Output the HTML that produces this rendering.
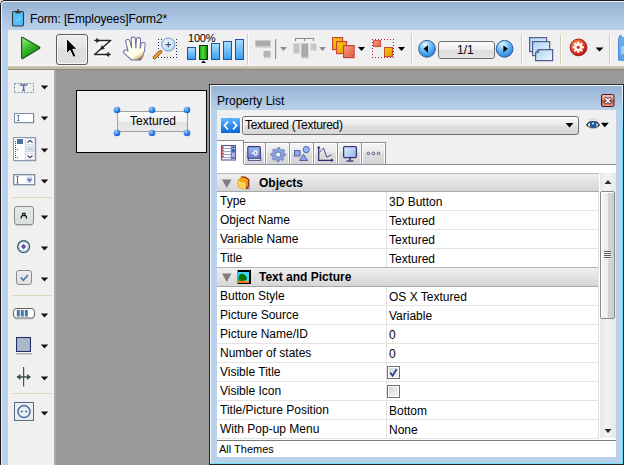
<!DOCTYPE html>
<html><head><meta charset="utf-8">
<style>
*{box-sizing:border-box}
html,body{margin:0;padding:0;width:624px;height:465px;overflow:hidden;position:relative;background:#e8e8e8;font-family:"Liberation Sans",sans-serif;font-size:12px;color:#000}
.a{position:absolute;display:block}
.t{position:absolute;white-space:nowrap;line-height:14px;color:#000}
.hb{font-weight:bold}
</style></head><body>
<div class="a" style="left:0px;top:0px;width:624px;height:465px;border-left:1px solid #1c1c1c;border-top:1px solid #1c1c1c;border-top-left-radius:5px;background:#b9d1ea"></div>
<div class="a" style="left:1px;top:1px;width:623px;height:464px;border-left:1px solid #eef3f9;border-top:1px solid #eef3f9;border-top-left-radius:4px"></div>
<div class="a" style="left:2px;top:2px;width:622px;height:28px;background:linear-gradient(#97b3d4,#b9d1ea);border-top-left-radius:3px"></div>
<div class="t" style="left:30px;top:12px;letter-spacing:-0.13px">Form: [Employees]Form2*</div>
<svg class="a" style="left:11px;top:9px;" width="14" height="18" viewBox="0 0 14 18"><rect x="1.5" y="2.5" width="11" height="14.5" rx="1.2" fill="#46b4f0" stroke="#3a3a3a" stroke-width="1.1"/><rect x="2.6" y="3.6" width="8.8" height="12.3" fill="#52c0f8"/><rect x="4.5" y="2" width="5" height="2.4" fill="#3a3a3a"/><rect x="6" y="0.5" width="2" height="2" fill="#3a3a3a"/><path d="M4.5 10 L6.3 12 L9.8 7.8" stroke="#9adcff" stroke-width="1" fill="none"/></svg>
<div class="a" style="left:8px;top:30px;width:616px;height:36px;background:#f0f0f0"></div>
<div class="a" style="left:8px;top:65px;width:616px;height:1px;background:#f8f8f8"></div>
<div class="a" style="left:8px;top:66px;width:616px;height:3px;background:linear-gradient(#cdc9b5,#bdb9a4)"></div>
<div class="a" style="left:8px;top:69px;width:616px;height:1px;background:#8a897a"></div>
<svg class="a" style="left:18px;top:35px;" width="25" height="26" viewBox="0 0 25 26"><defs><linearGradient id="gp" x1="0.1" y1="0" x2="0.75" y2="1"><stop offset="0" stop-color="#9cf07c"/><stop offset="0.45" stop-color="#3cbc2c"/><stop offset="1" stop-color="#0c780c"/></linearGradient></defs><path d="M3.6 3.2 Q3.6 1.8 4.9 2.5 L21.3 12 Q22.4 12.8 21.3 13.6 L4.9 23.4 Q3.6 24 3.6 22.6 Z" fill="url(#gp)" stroke="#1a5a1a" stroke-width="1.2" stroke-linejoin="round"/></svg>
<div class="a" style="left:56px;top:34px;width:32px;height:31px;border:1px solid #5c5c5c;border-radius:3px;background:linear-gradient(#ececec,#e4e4e4 45%,#dcdcdc 50%,#e0e0e0);box-shadow:inset 0 0 0 1px #f6f6f6"></div>
<svg class="a" style="left:63px;top:36px;" width="18" height="24" viewBox="0 0 18 24"><path d="M4.5 3.5 L4.5 18.5 L8 15.3 L11.2 22.3 L13.8 21.1 L10.8 14.3 L15.2 14.3 Z" fill="#a0a0a0" opacity="0.45"/><path d="M3.5 2.5 L3.5 17.5 L7 14.3 L10.2 21.3 L12.8 20.1 L9.8 13.3 L14.2 13.3 Z" fill="#000" stroke="#fff" stroke-width="0.9" stroke-linejoin="round"/></svg>
<svg class="a" style="left:91px;top:36px;" width="24" height="24" viewBox="0 0 24 24"><g stroke="#ffffff" stroke-width="3.4" fill="none" opacity="0.9" stroke-linejoin="round" transform="translate(0.5 0.7)"><path d="M3.3 4.5 H19.8 L3.5 18.5 H19.8"/></g><g stroke="#242424" stroke-width="1.45" fill="none" stroke-linejoin="round"><path d="M3.3 4.5 H19.8 L3.5 18.5 H19.8"/></g><path d="M5.4 2.2 L8.8 4.5 L5.4 6.8 Z M9.1 13.9 L13.6 12.6 L10.9 9.5 Z M14.6 18.5 L17.8 16.2 L17.8 20.8 Z" fill="#242424" stroke="#242424" stroke-width="0.4" stroke-linejoin="round"/></svg>
<svg class="a" style="left:122px;top:36px;" width="25" height="26" viewBox="0 0 25 26"><defs><linearGradient id="gh" x1="0.2" y1="0.3" x2="0.75" y2="1"><stop offset="0" stop-color="#fffff0"/><stop offset="0.5" stop-color="#fffbe6"/><stop offset="0.78" stop-color="#e4d0a0"/><stop offset="1" stop-color="#8a6020"/></linearGradient></defs><g stroke="#6c6cae" stroke-width="5.2" stroke-linecap="round" fill="none"><path d="M5.8 5.6 L7.8 13"/><path d="M11.3 3 L11.7 12"/><path d="M16.5 3.5 L16 12"/><path d="M21.1 8.5 L20.2 15.5"/><path d="M3.8 16 L7.6 19.2"/></g><path d="M7 11.5 L21 12 L20.6 19.5 L18.3 23.6 L9.5 23.6 L5.5 19 Z" fill="#6c6cae" stroke="#6c6cae" stroke-width="2" stroke-linejoin="round"/><g stroke="#fffcec" stroke-width="3.2" stroke-linecap="round" fill="none"><path d="M5.8 5.6 L7.8 13"/><path d="M11.3 3 L11.7 12"/><path d="M16.5 3.5 L16 12"/><path d="M21.1 8.5 L20.2 15.5"/><path d="M3.8 16 L7.6 19.2"/></g><path d="M7 12 L21 12.5 L20.6 19.5 L18.3 23.6 L9.5 23.6 L5.5 19 Z" fill="url(#gh)"/></svg>
<svg class="a" style="left:151px;top:36px;" width="28" height="25" viewBox="0 0 28 25"><defs><radialGradient id="gz" cx="0.4" cy="0.35" r="0.7"><stop offset="0" stop-color="#f0fbff"/><stop offset="0.7" stop-color="#bfe6fa"/><stop offset="1" stop-color="#9fd0f0"/></radialGradient></defs><g fill="#2a2a66"><rect x="7" y="3" width="1" height="1"/><rect x="10" y="3" width="1" height="1"/><rect x="25" y="3" width="1" height="1"/><rect x="7" y="6" width="1" height="1"/><rect x="7" y="9" width="1" height="1"/><rect x="7" y="12" width="1" height="1"/><rect x="25" y="6" width="1" height="1"/><rect x="25" y="9" width="1" height="1"/><rect x="25" y="12" width="1" height="1"/><rect x="25" y="15" width="1" height="1"/><rect x="25" y="18" width="1" height="1"/><rect x="25" y="21" width="1" height="1"/><rect x="7" y="21" width="1" height="1"/><rect x="10" y="21" width="1" height="1"/><rect x="13" y="21" width="1" height="1"/><rect x="16" y="21" width="1" height="1"/><rect x="19" y="21" width="1" height="1"/><rect x="22" y="21" width="1" height="1"/></g><path d="M3.5 21.5 L9.5 15.8" stroke="#7a4a10" stroke-width="3.6" stroke-linecap="round"/><path d="M3.5 21.5 L9.5 15.8" stroke="#f5a030" stroke-width="2.2" stroke-linecap="round"/><circle cx="17.3" cy="8.6" r="6.6" fill="url(#gz)" stroke="#8a8ec0" stroke-width="1"/><path d="M17.3 5.8 V11.4 M14.5 8.6 H20.1" stroke="#4a4a80" stroke-width="1.1"/></svg>
<div class="t" style="left:188px;top:31px;font-size:11px;color:#000;letter-spacing:-0.2px">100%</div>
<div class="a" style="left:187px;top:47px;width:9px;height:13px;border:1px solid #1c52a8;background:linear-gradient(#a8dcff,#3aa0f0)"></div>
<div class="a" style="left:199px;top:45px;width:9px;height:15px;border:1px solid #0a3a0a;background:linear-gradient(90deg,#20a020,#50e030 45%,#108010)"></div>
<div class="a" style="left:211px;top:43px;width:9px;height:17px;border:1px solid #1c52a8;background:linear-gradient(#a8dcff,#3aa0f0)"></div>
<div class="a" style="left:223px;top:41px;width:9px;height:19px;border:1px solid #1c52a8;background:linear-gradient(#a8dcff,#3aa0f0)"></div>
<div class="a" style="left:235px;top:39px;width:9px;height:21px;border:1px solid #1c52a8;background:linear-gradient(#a8dcff,#3aa0f0)"></div>
<svg class="a" style="left:200px;top:60px;" width="7" height="4" viewBox="0 0 7 4"><path d="M3.5 0.5 L6 3 L1 3 Z" fill="#000"/></svg>
<div class="a" style="left:247px;top:34px;width:1px;height:31px;background:#d6cfb8"></div>
<div class="a" style="left:248px;top:34px;width:1px;height:31px;background:#ffffff"></div>
<svg class="a" style="left:253px;top:37px;" width="36" height="24" viewBox="0 0 36 24"><rect x="2.5" y="3.5" width="15" height="6" fill="#aaaaaa" stroke="#c8c8c8" stroke-width="0.5"/><rect x="3.5" y="9.5" width="15" height="1.5" fill="#d6d6d6"/><rect x="10.5" y="14" width="7" height="6" fill="#b4b4b4"/><rect x="11" y="20" width="7" height="1.5" fill="#d8d8d8"/><rect x="22" y="2" width="1.2" height="20" fill="#939393"/><path d="M27 10 L34 10 L30.5 14 Z" fill="#8c8c8c"/></svg>
<svg class="a" style="left:291px;top:36px;" width="36" height="24" viewBox="0 0 36 24"><path d="M4.5 5 V2.5 H22.5 V5 M13.5 2.5 V5" stroke="#8a8a8a" stroke-width="1.1" fill="none"/><rect x="2.5" y="7.5" width="6" height="9.5" fill="#c2c2c2"/><rect x="3.5" y="17" width="6" height="1.2" fill="#dcdcdc"/><rect x="10.3" y="7.5" width="7" height="14" fill="#a9a9a9"/><rect x="11" y="21.5" width="7" height="1.2" fill="#d4d4d4"/><rect x="19.5" y="7.5" width="6" height="7" fill="#c8c8c8"/><path d="M28 11 L35 11 L31.5 15 Z" fill="#8c8c8c"/></svg>
<svg class="a" style="left:330px;top:35px;" width="38" height="25" viewBox="0 0 38 25"><defs><linearGradient id="gy" x1="0" y1="0" x2="1" y2="1"><stop offset="0" stop-color="#ffd800"/><stop offset="1" stop-color="#d89000"/></linearGradient><linearGradient id="gs" x1="0" y1="0" x2="1" y2="1"><stop offset="0" stop-color="#ffa080"/><stop offset="1" stop-color="#dc5a40"/></linearGradient></defs><rect x="2.6" y="2.6" width="10" height="12" fill="url(#gy)" stroke="#cc4040" stroke-width="1.2"/><rect x="6.6" y="6.6" width="10" height="12" fill="url(#gy)" stroke="#cc4040" stroke-width="1.2"/><rect x="13.6" y="10.6" width="10.5" height="12" fill="url(#gs)" stroke="#c84040" stroke-width="1.2"/><path d="M28 12 L35 12 L31.5 16 Z" fill="#000"/></svg>
<svg class="a" style="left:370px;top:37px;" width="38" height="23" viewBox="0 0 38 23"><defs><linearGradient id="gy2" x1="0" y1="0" x2="1" y2="1"><stop offset="0" stop-color="#ffd000"/><stop offset="1" stop-color="#d89000"/></linearGradient><linearGradient id="gs2" x1="0" y1="0" x2="1" y2="1"><stop offset="0" stop-color="#ffa080"/><stop offset="1" stop-color="#dc5a40"/></linearGradient></defs><g fill="#b01818"><rect x="2" y="2" width="1" height="1"/><rect x="5" y="2" width="1" height="1"/><rect x="8" y="2" width="1" height="1"/><rect x="11" y="2" width="1" height="1"/><rect x="14" y="2" width="1" height="1"/><rect x="17" y="2" width="1" height="1"/><rect x="20" y="2" width="1" height="1"/><rect x="23" y="2" width="1" height="1"/><rect x="2" y="5" width="1" height="1"/><rect x="2" y="8" width="1" height="1"/><rect x="2" y="11" width="1" height="1"/><rect x="2" y="14" width="1" height="1"/><rect x="2" y="17" width="1" height="1"/><rect x="2" y="20" width="1" height="1"/><rect x="5" y="20" width="1" height="1"/><rect x="8" y="20" width="1" height="1"/><rect x="11" y="20" width="1" height="1"/><rect x="14" y="20" width="1" height="1"/><rect x="17" y="20" width="1" height="1"/><rect x="20" y="20" width="1" height="1"/><rect x="23" y="20" width="1" height="1"/><rect x="23" y="5" width="1" height="1"/><rect x="23" y="8" width="1" height="1"/><rect x="23" y="11" width="1" height="1"/><rect x="23" y="14" width="1" height="1"/><rect x="23" y="17" width="1" height="1"/></g><rect x="3.6" y="3.6" width="7" height="6" fill="url(#gs2)" stroke="#c84a3a" stroke-width="0.9"/><rect x="14.5" y="10.5" width="8" height="9" fill="url(#gy2)" stroke="#c84a3a" stroke-width="1"/><path d="M28 10 L35 10 L31.5 14 Z" fill="#000"/></svg>
<div class="a" style="left:411px;top:34px;width:1px;height:31px;background:#d6cfb8"></div>
<div class="a" style="left:412px;top:34px;width:1px;height:31px;background:#ffffff"></div>
<svg class="a" style="left:417px;top:39px;" width="20" height="20" viewBox="0 0 20 20"><defs><radialGradient id="gb" cx="0.4" cy="0.25" r="0.8"><stop offset="0" stop-color="#e8f8ff"/><stop offset="0.45" stop-color="#6cc0f4"/><stop offset="1" stop-color="#1a78d8"/></radialGradient></defs><circle cx="10" cy="9.8" r="8.4" fill="url(#gb)" stroke="#3a5aa0" stroke-width="1"/><path d="M6.5 9.8 L11 6.2 L11 13.4 Z" fill="#000"/></svg>
<div class="a" style="left:438px;top:41px;width:57px;height:18px;border:1px solid #6e6e6e;border-radius:3px;background:linear-gradient(#fbfbfb,#eeeeee 50%,#dcdcdc 51%,#e6e6e6)"></div>
<div class="t" style="left:457px;top:43px;font-size:12px;color:#000">1/1</div>
<svg class="a" style="left:495px;top:39px;" width="20" height="20" viewBox="0 0 20 20"><defs><radialGradient id="gb2" cx="0.4" cy="0.25" r="0.8"><stop offset="0" stop-color="#e8f8ff"/><stop offset="0.45" stop-color="#6cc0f4"/><stop offset="1" stop-color="#1a78d8"/></radialGradient></defs><circle cx="9.6" cy="9.8" r="8.4" fill="url(#gb2)" stroke="#3a5aa0" stroke-width="1"/><path d="M12.8 9.8 L8.4 6.2 L8.4 13.4 Z" fill="#000"/></svg>
<div class="a" style="left:521px;top:34px;width:1px;height:31px;background:#d6cfb8"></div>
<div class="a" style="left:522px;top:34px;width:1px;height:31px;background:#ffffff"></div>
<svg class="a" style="left:527px;top:35px;" width="28" height="28" viewBox="0 0 28 28"><defs><linearGradient id="gpg" x1="0" y1="0" x2="1" y2="1"><stop offset="0" stop-color="#a8d4f2"/><stop offset="1" stop-color="#eef8ff"/></linearGradient></defs><rect x="2.6" y="2.6" width="17" height="14" fill="url(#gpg)" stroke="#5a5a92" stroke-width="1.2"/><rect x="5.6" y="6.6" width="17" height="14" fill="url(#gpg)" stroke="#5a5a92" stroke-width="1.2"/><path d="M11.6 14.6 H25.6 V25.6 H8.6 V17.6 Z" fill="url(#gpg)" stroke="#5a5a92" stroke-width="1.2"/><path d="M11.6 14.6 V17.6 H8.6" fill="none" stroke="#5a5a92" stroke-width="0.9"/></svg>
<div class="a" style="left:560px;top:34px;width:1px;height:31px;background:#d6cfb8"></div>
<div class="a" style="left:561px;top:34px;width:1px;height:31px;background:#ffffff"></div>
<svg class="a" style="left:567px;top:36px;" width="24" height="24" viewBox="0 0 24 24"><defs><radialGradient id="gr" cx="0.35" cy="0.3" r="0.75"><stop offset="0" stop-color="#ff9050"/><stop offset="0.6" stop-color="#e04020"/><stop offset="1" stop-color="#b80e0e"/></radialGradient></defs><circle cx="11.5" cy="11.4" r="8.4" fill="url(#gr)" stroke="#9a1010" stroke-width="0.9"/><g fill="#fff" transform="translate(11.3 11.3)"><circle r="3.8"/><rect x="-1.1" y="-5.6" width="2.2" height="11.2"/><rect x="-5.6" y="-1.1" width="11.2" height="2.2"/><rect x="-1.1" y="-5.6" width="2.2" height="11.2" transform="rotate(45)"/><rect x="-1.1" y="-5.6" width="2.2" height="11.2" transform="rotate(-45)"/></g><circle cx="11.3" cy="11.3" r="1.6" fill="#d83018"/></svg>
<svg class="a" style="left:594px;top:46px;" width="11" height="7" viewBox="0 0 11 7"><path d="M1.5 1.5 L9.5 1.5 L5.5 5.5 Z" fill="#000"/></svg>
<div class="a" style="left:609px;top:34px;width:1px;height:31px;background:#d6cfb8"></div>
<div class="a" style="left:610px;top:34px;width:1px;height:31px;background:#ffffff"></div>
<div class="a" style="left:618px;top:37px;width:6px;height:24px;border-radius:2px 0 0 2px;background:linear-gradient(#6aaef0,#5aa0ea);border-left:1px solid #4a88d0"></div>
<div class="a" style="left:619px;top:35px;width:3px;height:3px;background:#5aa0e8;border-radius:1px 1px 0 0"></div>
<div class="a" style="left:621px;top:46px;width:3px;height:8px;background:#a8d0f4"></div>
<div class="a" style="left:8px;top:70px;width:46px;height:395px;background:#f0f0f0"></div>
<div class="a" style="left:54px;top:70px;width:2px;height:395px;background:linear-gradient(90deg,#b4b4b4,#a2a2a2)"></div>
<div class="a" style="left:56px;top:70px;width:568px;height:395px;background:#999999"></div>
<svg class="a" style="left:13px;top:82px;" width="22" height="12" viewBox="0 0 22 12"><rect x="1.5" y="1.5" width="19" height="9" fill="none" stroke="#7a8898" stroke-width="1" stroke-dasharray="1.6 1.4"/><path d="M7.5 3.5 V3 H13.8 V3.5 M10.6 3 V8.8 M9.2 8.6 H12" stroke="#5a6ea0" stroke-width="1.5" fill="none"/></svg>
<svg class="a" style="left:40px;top:85px;" width="9" height="6" viewBox="0 0 9 6"><path d="M0.8 0.6 L8.2 0.6 L4.5 4.6 Z" fill="#111"/></svg>
<svg class="a" style="left:13px;top:112px;" width="23" height="13" viewBox="0 0 23 13"><rect x="2" y="2" width="20" height="10" fill="#c8ccd0" opacity="0.6"/><rect x="1.5" y="1.5" width="19" height="9" fill="#fff" stroke="#7a8aa0" stroke-width="1"/><path d="M4 3.5 H6.5 M5.25 3.5 V8.5 M4 8.5 H6.5" stroke="#4a6ab0" stroke-width="0.9" fill="none"/></svg>
<svg class="a" style="left:40px;top:116px;" width="9" height="6" viewBox="0 0 9 6"><path d="M0.8 0.6 L8.2 0.6 L4.5 4.6 Z" fill="#111"/></svg>
<svg class="a" style="left:12px;top:136px;" width="25" height="26" viewBox="0 0 25 26"><rect x="2" y="2" width="23" height="24" fill="#c0c4c8" opacity="0.5"/><rect x="1.5" y="1.5" width="22" height="23" fill="#f4f6f8" stroke="#8a9ab0" stroke-width="1"/><rect x="2" y="2" width="10" height="22" fill="#fff"/><rect x="5" y="3" width="6" height="5" fill="#5070a0"/><g fill="#555"><rect x="3" y="5" width="1" height="1"/><rect x="3" y="7" width="1" height="1"/><rect x="3" y="9" width="1" height="1"/><rect x="3" y="11" width="1" height="1"/><rect x="3" y="13" width="1" height="1"/><rect x="5" y="13" width="1" height="1"/><rect x="3" y="15" width="1" height="1"/><rect x="3" y="17" width="1" height="1"/><rect x="3" y="19" width="1" height="1"/><rect x="3" y="21" width="1" height="1"/><rect x="5" y="21" width="1" height="1"/></g><rect x="13.5" y="2.5" width="9" height="6" fill="#fff" stroke="#c8d0dc" stroke-width="0.8"/><rect x="13.5" y="10.5" width="9" height="5" fill="#fff" stroke="#c8d0dc" stroke-width="0.8"/><rect x="14.5" y="11.5" width="7" height="3" fill="#c4cce0"/><rect x="13.5" y="17.5" width="9" height="6" fill="#fff" stroke="#c8d0dc" stroke-width="0.8"/><path d="M15.5 6.5 L18 4.2 L20.5 6.5 M15.5 19.5 L18 21.8 L20.5 19.5" stroke="#3a4a70" stroke-width="1.2" fill="none"/></svg>
<svg class="a" style="left:40px;top:148px;" width="9" height="6" viewBox="0 0 9 6"><path d="M0.8 0.6 L8.2 0.6 L4.5 4.6 Z" fill="#111"/></svg>
<svg class="a" style="left:12px;top:173px;" width="24" height="13" viewBox="0 0 24 13"><rect x="1.7" y="1.7" width="21" height="10" fill="#fff" stroke="#7a8898" stroke-width="1.3"/><path d="M4.5 3.5 H6.5 M5.5 3.5 V10 M4.5 10 H6.5" stroke="#4a5a80" stroke-width="0.9" fill="none"/><rect x="14.5" y="3.5" width="6" height="6.5" rx="1" fill="#d0d8f0"/><path d="M15.7 5.8 L17.5 7.8 L19.3 5.8" stroke="#3a5080" stroke-width="1.2" fill="none"/></svg>
<svg class="a" style="left:40px;top:179px;" width="9" height="6" viewBox="0 0 9 6"><path d="M0.8 0.6 L8.2 0.6 L4.5 4.6 Z" fill="#111"/></svg>
<div class="a" style="left:12px;top:197px;width:40px;height:1px;background:#ddd4bc"></div>
<div class="a" style="left:14px;top:206px;width:20px;height:19px;border:1px solid #8e8e8e;border-radius:3px;background:linear-gradient(#e6e8e8,#dadede);box-shadow:0 1px 1px rgba(0,0,0,0.15)"></div>
<svg class="a" style="left:19px;top:210px;" width="10" height="10" viewBox="0 0 10 10"><path d="M2.2 8.6 V6.8 L3.6 5 V3.2 H6 V5 L7.4 6.8 V8.6 M3.6 5.6 H6" stroke="#000" stroke-width="1.15" fill="none" stroke-linejoin="round"/></svg>
<svg class="a" style="left:40px;top:215px;" width="9" height="6" viewBox="0 0 9 6"><path d="M0.8 0.6 L8.2 0.6 L4.5 4.6 Z" fill="#111"/></svg>
<svg class="a" style="left:16px;top:239px;" width="16" height="16" viewBox="0 0 16 16"><circle cx="7.6" cy="7.6" r="5.9" fill="#fff" stroke="#485868" stroke-width="1.5"/><circle cx="7.6" cy="7.6" r="4.6" fill="none" stroke="#9ad4ea" stroke-width="1.2"/><path d="M7.6 4.8 L10.4 7.6 L7.6 10.4 L4.8 7.6 Z" fill="#7450a4"/></svg>
<svg class="a" style="left:40px;top:246px;" width="9" height="6" viewBox="0 0 9 6"><path d="M0.8 0.6 L8.2 0.6 L4.5 4.6 Z" fill="#111"/></svg>
<div class="a" style="left:16px;top:270px;width:16px;height:15px;border:1px solid #8a8a8a;border-radius:3px;background:linear-gradient(#eceeee,#dfe2e2)"></div>
<svg class="a" style="left:19px;top:273px;" width="11" height="10" viewBox="0 0 11 10"><path d="M1.8 4.5 L4.3 7.2 L9 2" stroke="#4a70b0" stroke-width="1.6" fill="none"/></svg>
<svg class="a" style="left:40px;top:277px;" width="9" height="6" viewBox="0 0 9 6"><path d="M0.8 0.6 L8.2 0.6 L4.5 4.6 Z" fill="#111"/></svg>
<div class="a" style="left:12px;top:295px;width:40px;height:1px;background:#ddd4bc"></div>
<svg class="a" style="left:12px;top:307px;" width="24" height="13" viewBox="0 0 24 13"><rect x="1.5" y="1.5" width="21" height="9.5" rx="3" fill="#fff" stroke="#5a5a5a" stroke-width="1"/><rect x="4.8" y="3" width="3" height="6.5" fill="#4a78a8"/><rect x="8.8" y="3" width="3" height="6.5" fill="#4a78a8"/><rect x="12.8" y="3" width="3" height="6.5" fill="#4a78a8"/><path d="M3 11.8 H21" stroke="#a8a8a8" stroke-width="0.8"/></svg>
<svg class="a" style="left:40px;top:313px;" width="9" height="6" viewBox="0 0 9 6"><path d="M0.8 0.6 L8.2 0.6 L4.5 4.6 Z" fill="#111"/></svg>
<svg class="a" style="left:14px;top:335px;" width="20" height="20" viewBox="0 0 20 20"><rect x="2" y="18" width="16" height="1.5" fill="#b0b0b0"/><rect x="1.5" y="1.5" width="16" height="16.5" fill="#fff"/><rect x="2.5" y="2.5" width="14" height="14" fill="#a8b8c8" stroke="#2a2a6a" stroke-width="1.1"/></svg>
<svg class="a" style="left:40px;top:344px;" width="9" height="6" viewBox="0 0 9 6"><path d="M0.8 0.6 L8.2 0.6 L4.5 4.6 Z" fill="#111"/></svg>
<svg class="a" style="left:15px;top:366px;" width="18" height="22" viewBox="0 0 18 22"><path d="M8.6 1 V20.5" stroke="#505050" stroke-width="1.2"/><path d="M2.5 11 H15" stroke="#405050" stroke-width="1.5"/><path d="M1.5 11 L5.5 8 V14 Z M16 11 L12 8 V14 Z" fill="#405050"/></svg>
<svg class="a" style="left:40px;top:376px;" width="9" height="6" viewBox="0 0 9 6"><path d="M0.8 0.6 L8.2 0.6 L4.5 4.6 Z" fill="#111"/></svg>
<div class="a" style="left:12px;top:393px;width:40px;height:1px;background:#ddd4bc"></div>
<svg class="a" style="left:13px;top:401px;" width="22" height="21" viewBox="0 0 22 21"><rect x="1.5" y="1.5" width="19" height="18" fill="#e8eef4" stroke="#5a6a80" stroke-width="1"/><circle cx="11" cy="10.5" r="6" fill="none" stroke="#4a70a0" stroke-width="1.5"/><circle cx="8.8" cy="10.5" r="1.1" fill="#4a70a0"/><circle cx="13.2" cy="10.5" r="1.1" fill="#4a70a0"/></svg>
<svg class="a" style="left:40px;top:411px;" width="9" height="6" viewBox="0 0 9 6"><path d="M0.8 0.6 L8.2 0.6 L4.5 4.6 Z" fill="#111"/></svg>
<div class="a" style="left:76px;top:90px;width:131px;height:63px;border:1px solid #000;background:#f0f0f0"></div>
<div class="a" style="left:117px;top:111px;width:71px;height:21px;border:1px solid #a0a0a0;background:linear-gradient(#fbfbfb,#f0f0f0 50%,#e2e2e2 55%,#ebebeb)"></div>
<div class="t" style="left:130px;top:114px;color:#000">Textured</div>
<svg class="a" style="left:113px;top:106px;" width="8" height="8" viewBox="0 0 8 8"><defs><radialGradient id="gh117110" cx="0.35" cy="0.3" r="0.8"><stop offset="0" stop-color="#9cd0ff"/><stop offset="0.6" stop-color="#2c7ce0"/><stop offset="1" stop-color="#1a5ac0"/></radialGradient></defs><circle cx="4" cy="4" r="3.3" fill="url(#gh117110)"/></svg>
<svg class="a" style="left:113px;top:129px;" width="8" height="8" viewBox="0 0 8 8"><defs><radialGradient id="gh117133" cx="0.35" cy="0.3" r="0.8"><stop offset="0" stop-color="#9cd0ff"/><stop offset="0.6" stop-color="#2c7ce0"/><stop offset="1" stop-color="#1a5ac0"/></radialGradient></defs><circle cx="4" cy="4" r="3.3" fill="url(#gh117133)"/></svg>
<svg class="a" style="left:148px;top:106px;" width="8" height="8" viewBox="0 0 8 8"><defs><radialGradient id="gh152110" cx="0.35" cy="0.3" r="0.8"><stop offset="0" stop-color="#9cd0ff"/><stop offset="0.6" stop-color="#2c7ce0"/><stop offset="1" stop-color="#1a5ac0"/></radialGradient></defs><circle cx="4" cy="4" r="3.3" fill="url(#gh152110)"/></svg>
<svg class="a" style="left:148px;top:129px;" width="8" height="8" viewBox="0 0 8 8"><defs><radialGradient id="gh152133" cx="0.35" cy="0.3" r="0.8"><stop offset="0" stop-color="#9cd0ff"/><stop offset="0.6" stop-color="#2c7ce0"/><stop offset="1" stop-color="#1a5ac0"/></radialGradient></defs><circle cx="4" cy="4" r="3.3" fill="url(#gh152133)"/></svg>
<svg class="a" style="left:183px;top:106px;" width="8" height="8" viewBox="0 0 8 8"><defs><radialGradient id="gh187110" cx="0.35" cy="0.3" r="0.8"><stop offset="0" stop-color="#9cd0ff"/><stop offset="0.6" stop-color="#2c7ce0"/><stop offset="1" stop-color="#1a5ac0"/></radialGradient></defs><circle cx="4" cy="4" r="3.3" fill="url(#gh187110)"/></svg>
<svg class="a" style="left:183px;top:129px;" width="8" height="8" viewBox="0 0 8 8"><defs><radialGradient id="gh187133" cx="0.35" cy="0.3" r="0.8"><stop offset="0" stop-color="#9cd0ff"/><stop offset="0.6" stop-color="#2c7ce0"/><stop offset="1" stop-color="#1a5ac0"/></radialGradient></defs><circle cx="4" cy="4" r="3.3" fill="url(#gh187133)"/></svg>
<div class="a" style="left:209px;top:84px;width:415px;height:381px;background:#262626"></div>
<div class="a" style="left:210px;top:85px;width:413px;height:379px;background:#f4f8fc"></div>
<div class="a" style="left:622px;top:85px;width:1px;height:379px;background:linear-gradient(#f4f8fc,#70dcfa 12%)"></div>
<div class="a" style="left:210px;top:463px;width:413px;height:1px;background:#70dcfa"></div>
<div class="a" style="left:211px;top:86px;width:411px;height:377px;background:#b9d1ea"></div>
<div class="a" style="left:211px;top:86px;width:411px;height:24px;background:linear-gradient(#97b3d4,#b9d1ea)"></div>
<div class="t" style="left:217px;top:94px;">Property List</div>
<div class="a" style="left:217px;top:110px;width:399px;height:347px;background:#f0f0f0"></div>
<svg class="a" style="left:600px;top:93px;" width="16" height="15" viewBox="0 0 16 15"><defs><linearGradient id="gc" x1="0" y1="0" x2="0" y2="1"><stop offset="0" stop-color="#f4c4b4"/><stop offset="0.45" stop-color="#e49080"/><stop offset="0.5" stop-color="#cc4a30"/><stop offset="1" stop-color="#eaa090"/></linearGradient></defs><rect x="1.5" y="1.5" width="12.5" height="12" rx="1.5" fill="url(#gc)" stroke="#4a1820" stroke-width="1"/><path d="M5.9 5.6 L9.9 9.7 M9.9 5.6 L5.9 9.7" stroke="#3a3048" stroke-width="3" stroke-linecap="round"/><path d="M5.9 5.6 L9.9 9.7 M9.9 5.6 L5.9 9.7" stroke="#fff" stroke-width="1.6" stroke-linecap="round"/></svg>
<svg class="a" style="left:220px;top:117px;" width="21" height="17" viewBox="0 0 21 17"><defs><linearGradient id="ga" x1="0" y1="0" x2="0" y2="1"><stop offset="0" stop-color="#5cb8ff"/><stop offset="1" stop-color="#0a64d8"/></linearGradient></defs><rect x="1" y="1" width="19" height="15" fill="url(#ga)"/><rect x="10" y="1" width="1" height="15" fill="#3a8ae8" opacity="0.6"/><path d="M8 4.5 L4.5 8.5 L8 12.5 M13 4.5 L16.5 8.5 L13 12.5" stroke="#fff" stroke-width="1.8" fill="none"/></svg>
<div class="a" style="left:242px;top:116px;width:337px;height:19px;border:1px solid #707070;border-radius:3px;background:linear-gradient(#f6f6f6,#ececec 45%,#dedede 55%,#d6d6d6);box-shadow:inset 0 1px 0 #fff, inset 1px 0 0 #fafafa"></div>
<div class="t" style="left:245px;top:118px;letter-spacing:-0.3px">Textured (Textured)</div>
<svg class="a" style="left:564px;top:122px;" width="11" height="7" viewBox="0 0 11 7"><path d="M1.5 1 L9.5 1 L5.5 5.5 Z" fill="#000"/></svg>
<svg class="a" style="left:585px;top:116px;" width="16" height="15" viewBox="0 0 16 15"><path d="M4.5 5 L4 3 M7 4.3 L6.8 2.2 M9.5 4.3 L9.8 2.2 M12 5 L12.8 3.2" stroke="#b0b0b0" stroke-width="0.8"/><path d="M1.8 8.8 C4.5 4.6 11.8 4.6 14.2 8.8 C11.8 12.6 4.5 12.6 1.8 8.8 Z" fill="#fffaf0" stroke="#2e2e2e" stroke-width="1.3"/><path d="M3 10 C5 11.8 11 11.8 13 10" stroke="#d8b888" stroke-width="0.8" fill="none"/><circle cx="8.2" cy="8.6" r="3.4" fill="#1e58a8"/><circle cx="8" cy="7.5" r="1" fill="#e8f4ff"/></svg>
<svg class="a" style="left:600px;top:122px;" width="10" height="6" viewBox="0 0 10 6"><path d="M0.8 0.8 L8.8 0.8 L4.8 5.2 Z" fill="#000"/></svg>
<div class="a" style="left:217px;top:140px;width:27px;height:25px;border-top:1px solid #8a8e99;border-right:1px solid #8a8e99;background:#fff"></div>
<div class="a" style="left:244px;top:142px;width:22px;height:22px;border:1px solid #8a8e99;border-left:none;border-bottom:none;background:linear-gradient(#f4f4f4,#ececec 40%,#dedede 50%,#d4d4d4);box-shadow:inset 1px 1px 0 #fff, inset -1px 0 0 #fafafa"></div>
<div class="a" style="left:266px;top:142px;width:24px;height:22px;border:1px solid #8a8e99;border-left:none;border-bottom:none;background:linear-gradient(#f4f4f4,#ececec 40%,#dedede 50%,#d4d4d4);box-shadow:inset 1px 1px 0 #fff, inset -1px 0 0 #fafafa"></div>
<div class="a" style="left:290px;top:142px;width:24px;height:22px;border:1px solid #8a8e99;border-left:none;border-bottom:none;background:linear-gradient(#f4f4f4,#ececec 40%,#dedede 50%,#d4d4d4);box-shadow:inset 1px 1px 0 #fff, inset -1px 0 0 #fafafa"></div>
<div class="a" style="left:314px;top:142px;width:24px;height:22px;border:1px solid #8a8e99;border-left:none;border-bottom:none;background:linear-gradient(#f4f4f4,#ececec 40%,#dedede 50%,#d4d4d4);box-shadow:inset 1px 1px 0 #fff, inset -1px 0 0 #fafafa"></div>
<div class="a" style="left:338px;top:142px;width:24px;height:22px;border:1px solid #8a8e99;border-left:none;border-bottom:none;background:linear-gradient(#f4f4f4,#ececec 40%,#dedede 50%,#d4d4d4);box-shadow:inset 1px 1px 0 #fff, inset -1px 0 0 #fafafa"></div>
<div class="a" style="left:362px;top:142px;width:24px;height:22px;border:1px solid #8a8e99;border-left:none;border-bottom:none;background:linear-gradient(#f4f4f4,#ececec 40%,#dedede 50%,#d4d4d4);box-shadow:inset 1px 1px 0 #fff, inset -1px 0 0 #fafafa"></div>
<div class="a" style="left:244px;top:164px;width:372px;height:1px;background:#8a8e99"></div>
<div class="a" style="left:217px;top:165px;width:399px;height:275px;background:#fff"></div>
<div class="a" style="left:217px;top:164px;width:27px;height:1px;background:#fff"></div>
<div class="a" style="left:217px;top:173px;width:382px;height:1px;background:#b5b5b5"></div>
<div class="a" style="left:217px;top:174px;width:382px;height:17px;background:linear-gradient(#f0f0f0,#d5d5d5)"></div>
<div class="a" style="left:217px;top:191px;width:382px;height:1px;background:#a8a8a8"></div>
<div class="t" style="left:259px;top:176px;font-weight:bold">Objects</div>
<div class="t" style="left:220px;top:194px;">Type</div>
<div class="t" style="left:389px;top:195px;">3D Button</div>
<div class="a" style="left:217px;top:210px;width:382px;height:1px;background:#e3e3e3"></div>
<div class="t" style="left:220px;top:213px;">Object Name</div>
<div class="t" style="left:389px;top:214px;">Textured</div>
<div class="a" style="left:217px;top:229px;width:382px;height:1px;background:#e3e3e3"></div>
<div class="t" style="left:220px;top:232px;">Variable Name</div>
<div class="t" style="left:389px;top:233px;">Textured</div>
<div class="a" style="left:217px;top:248px;width:382px;height:1px;background:#e3e3e3"></div>
<div class="t" style="left:220px;top:251px;">Title</div>
<div class="t" style="left:389px;top:252px;">Textured</div>
<div class="a" style="left:217px;top:267px;width:382px;height:1px;background:#e3e3e3"></div>
<div class="a" style="left:217px;top:267px;width:382px;height:1px;background:#b5b5b5"></div>
<div class="a" style="left:217px;top:268px;width:382px;height:18px;background:linear-gradient(#f0f0f0,#d5d5d5)"></div>
<div class="a" style="left:217px;top:286px;width:382px;height:1px;background:#a8a8a8"></div>
<div class="t" style="left:259px;top:270px;font-weight:bold">Text and Picture</div>
<div class="t" style="left:220px;top:289px;">Button Style</div>
<div class="t" style="left:389px;top:290px;">OS X Textured</div>
<div class="a" style="left:217px;top:305px;width:382px;height:1px;background:#e3e3e3"></div>
<div class="t" style="left:220px;top:308px;">Picture Source</div>
<div class="t" style="left:389px;top:309px;">Variable</div>
<div class="a" style="left:217px;top:324px;width:382px;height:1px;background:#e3e3e3"></div>
<div class="t" style="left:220px;top:327px;">Picture Name/ID</div>
<div class="t" style="left:389px;top:328px;">0</div>
<div class="a" style="left:217px;top:343px;width:382px;height:1px;background:#e3e3e3"></div>
<div class="t" style="left:220px;top:346px;">Number of states</div>
<div class="t" style="left:389px;top:347px;">0</div>
<div class="a" style="left:217px;top:362px;width:382px;height:1px;background:#e3e3e3"></div>
<div class="t" style="left:220px;top:365px;">Visible Title</div>
<div class="a" style="left:217px;top:381px;width:382px;height:1px;background:#e3e3e3"></div>
<div class="t" style="left:220px;top:384px;">Visible Icon</div>
<div class="a" style="left:217px;top:400px;width:382px;height:1px;background:#e3e3e3"></div>
<div class="t" style="left:220px;top:403px;">Title/Picture Position</div>
<div class="t" style="left:389px;top:404px;">Bottom</div>
<div class="a" style="left:217px;top:419px;width:382px;height:1px;background:#e3e3e3"></div>
<div class="t" style="left:220px;top:422px;">With Pop-up Menu</div>
<div class="t" style="left:389px;top:423px;">None</div>
<div class="a" style="left:217px;top:438px;width:382px;height:1px;background:#e3e3e3"></div>
<div class="a" style="left:598px;top:192px;width:1px;height:247px;background:#e3e3e3"></div>
<div class="a" style="left:386px;top:192px;width:1px;height:75px;background:#e3e3e3"></div>
<div class="a" style="left:386px;top:287px;width:1px;height:151px;background:#e3e3e3"></div>
<div class="a" style="left:217px;top:439px;width:399px;height:1px;background:#fff"></div>
<div class="a" style="left:217px;top:440px;width:399px;height:1px;background:#7a7a7a"></div>
<div class="a" style="left:217px;top:441px;width:399px;height:16px;background:#fff"></div>
<div class="t" style="left:219px;top:442px;font-size:11px">All Themes</div>
<div class="a" style="left:600px;top:173px;width:16px;height:265px;background:linear-gradient(90deg,#e8e8e8,#f2f2f2 40%,#e8e8e8)"></div>
<svg class="a" style="left:220px;top:144px;" width="17" height="17" viewBox="0 0 17 17"><rect x="1.5" y="1.5" width="14" height="14.5" fill="#fff" stroke="#55559a" stroke-width="1.1"/><g stroke="#8a8ac0" stroke-width="0.9"><path d="M2 4.6 H11.5 M2 7.6 H11.5 M2 10.6 H11.5 M2 13.6 H11.5"/></g><g fill="#d81818"><rect x="2" y="2.6" width="1.6" height="1.4"/><rect x="2" y="5.6" width="1.6" height="1.4"/><rect x="2" y="8.6" width="1.6" height="1.4"/><rect x="2" y="11.6" width="1.6" height="1.4"/></g><rect x="11.5" y="2" width="3.6" height="13.5" fill="#a4b4e4"/><path d="M11.3 2 V15.5" stroke="#55559a" stroke-width="0.8"/><rect x="11.8" y="5" width="3" height="3.5" fill="#3a68b8"/><path d="M12 4 L13.3 2.3 L14.6 4 Z M12 13.6 L13.3 15.3 L14.6 13.6 Z" fill="#22226a"/></svg>
<svg class="a" style="left:246px;top:145px;" width="17" height="17" viewBox="0 0 17 17"><defs><linearGradient id="gbk" x1="0" y1="0" x2="0" y2="1"><stop offset="0" stop-color="#98c0f8"/><stop offset="1" stop-color="#7078d0"/></linearGradient></defs><rect x="1.8" y="1.6" width="12.5" height="12" rx="1" fill="url(#gbk)" stroke="#34347a" stroke-width="1.1"/><rect x="2.3" y="13.3" width="12.5" height="2" fill="#fff" stroke="#34347a" stroke-width="0.9"/><path d="M5.5 8 H7.5" stroke="#fff" stroke-width="1"/><ellipse cx="9.5" cy="7.8" rx="1.6" ry="2.2" fill="none" stroke="#fff" stroke-width="1.2"/></svg>
<svg class="a" style="left:269px;top:146px;" width="18" height="18" viewBox="0 0 18 18"><g transform="translate(8.9 8.8)" fill="#8aa0e0" stroke="#6070b0" stroke-width="0.9"><path d="M-1.3 -7.3 L1.3 -7.3 L1.7 -5.2 L3.4 -4.4 L5.2 -5.7 L7 -3.9 L5.7 -2.1 L6.4 -0.5 L7.5 -0.1 L7.5 2.3 L5.4 2.6 L4.6 4.2 L5.8 6 L4 7.8 L2.2 6.5 L0.6 7.2 L0.2 9.2 L-2.2 9.2 L-2.6 7.1 L-4.2 6.3 L-6 7.6 L-7.8 5.8 L-6.5 4 L-7.2 2.4 L-9.2 2 L-9.2 -0.4 L-7.1 -0.8 L-6.4 -2.4 L-7.6 -4.2 L-5.8 -6 L-4 -4.7 L-2.4 -5.4 Z" transform="translate(0.9 -0.9) scale(0.85)"/><circle cx="0.3" cy="-0.2" r="2.6" fill="#f0f0f0" stroke="#6070b0"/></g></svg>
<svg class="a" style="left:292px;top:146px;" width="18" height="17" viewBox="0 0 18 17"><rect x="2.5" y="4.5" width="5.5" height="5.5" fill="#90a8f0" stroke="#5060a0" stroke-width="1"/><circle cx="14.3" cy="3.6" r="3.1" fill="#90b8f8" stroke="#5060a0" stroke-width="1"/><path d="M11.5 8.3 L15.5 14.5 L7.5 14.5 Z" fill="#90a8f0" stroke="#5060a0" stroke-width="1" stroke-linejoin="round"/></svg>
<svg class="a" style="left:316px;top:145px;" width="19" height="18" viewBox="0 0 19 18"><path d="M2.7 2 V15.3 H16.5" stroke="#2a2a6a" stroke-width="1.2" fill="none"/><path d="M1 3.5 L2.7 0.8 L4.4 3.5 Z M15 13.6 L17.8 15.3 L15 17 Z" fill="#2a2a6a"/><path d="M3.3 7.5 L7.5 3 L10.7 12.2 L15.5 9.8" stroke="#4a4a8a" stroke-width="1" fill="none"/></svg>
<svg class="a" style="left:341px;top:145px;" width="18" height="18" viewBox="0 0 18 18"><defs><linearGradient id="gmo" x1="0" y1="0" x2="1" y2="1"><stop offset="0" stop-color="#e0f8ff"/><stop offset="1" stop-color="#98a8e8"/></linearGradient></defs><rect x="2.6" y="1.6" width="12.8" height="11" rx="1" fill="url(#gmo)" stroke="#38387c" stroke-width="1.3"/><path d="M9 12.8 V15.5" stroke="#38387c" stroke-width="1.6"/><path d="M5.5 16 H12.5" stroke="#38387c" stroke-width="1.4"/></svg>
<svg class="a" style="left:365px;top:150px;" width="18" height="7" viewBox="0 0 18 7"><g fill="none" stroke="#4a4a90" stroke-width="0.9"><circle cx="3.5" cy="3.4" r="1.3"/><circle cx="8.5" cy="3.4" r="1.3"/><circle cx="13.5" cy="3.4" r="1.3"/></g></svg>
<svg class="a" style="left:221px;top:178px;" width="12" height="11" viewBox="0 0 12 11"><path d="M1 1.5 L10.5 1.5 L5.75 10 Z" fill="#7e7e7e"/></svg>
<svg class="a" style="left:221px;top:272px;" width="12" height="11" viewBox="0 0 12 11"><path d="M1 1.5 L10.5 1.5 L5.75 10 Z" fill="#7e7e7e"/></svg>
<svg class="a" style="left:236px;top:175px;" width="17" height="16" viewBox="0 0 17 16"><path d="M11 12.5 L14.5 12 L14 14 L11 15 Z" fill="#6a7078" opacity="0.55"/><path d="M2 5 L5 2 H9 L12.8 4.5 V11 L10 13.8 H6.5 L2 11.5 Z" fill="#fcd24a"/><path d="M2 5 L5 2 H9 L12.8 4.5 L9.5 7.3 H5.5 Z" fill="#f8a418"/><path d="M9.5 7.3 L12.8 4.5 V11 L10 13.8 H9.5 Z" fill="#d89218"/><path d="M5 2 H9 L12.8 4.5 V11 L10 13.8" fill="none" stroke="#8c0c08" stroke-width="1.1"/><path d="M2 5 V11.5 L6.5 13.8 H10" fill="none" stroke="#e0a020" stroke-width="0.8"/><g fill="#fffad0"><rect x="3" y="7" width="1" height="1"/><rect x="5.5" y="8" width="1" height="1"/><rect x="8" y="10" width="1" height="1"/><rect x="8" y="12" width="1" height="1"/></g></svg>
<svg class="a" style="left:236px;top:269px;" width="16" height="16" viewBox="0 0 16 16"><rect x="1" y="1" width="14" height="14" fill="#000"/><rect x="1.5" y="3" width="11.5" height="11" fill="#40d8f8"/><rect x="1" y="1" width="1" height="14" fill="#a08070"/><circle cx="6" cy="8" r="3.2" fill="#007400"/><circle cx="8.3" cy="9" r="2.6" fill="#007400"/><circle cx="4.5" cy="10" r="2.2" fill="#007400"/><rect x="5.5" y="10.5" width="1.5" height="2" fill="#704010"/><rect x="1.5" y="12" width="11.5" height="2" fill="#f08010"/><rect x="3.5" y="10.5" width="1" height="1" fill="#f8e010"/></svg>
<div class="a" style="left:387px;top:366px;width:13px;height:13px;border:1px solid #707070;background:#fff"></div>
<div class="a" style="left:389px;top:368px;width:9px;height:9px;background:linear-gradient(135deg,#d4d8dc,#f4f6f8)"></div>
<div class="a" style="left:387px;top:385px;width:13px;height:13px;border:1px solid #707070;background:#fff"></div>
<div class="a" style="left:389px;top:387px;width:9px;height:9px;background:linear-gradient(135deg,#d4d8dc,#f4f6f8)"></div>
<svg class="a" style="left:387px;top:366px;" width="13" height="13" viewBox="0 0 13 13"><path d="M3.2 6.6 L5.6 9.8 L9.6 3.2" stroke="#2a3a90" stroke-width="1.7" fill="none"/></svg>
<svg class="a" style="left:603px;top:178px;" width="11" height="8" viewBox="0 0 11 8"><path d="M1.5 6 L5 2 L8.5 6 Z" fill="#2a2a2a"/></svg>
<svg class="a" style="left:603px;top:427px;" width="11" height="8" viewBox="0 0 11 8"><path d="M1.5 2 L5 6 L8.5 2 Z" fill="#2a2a2a"/></svg>
<div class="a" style="left:600px;top:191px;width:15px;height:128px;border:1px solid #8a8a8a;border-radius:2px;background:linear-gradient(90deg,#f6f6f6,#ececec 50%,#d4d4d6 52%,#cfcfd2);box-shadow:inset 1px 1px 0 #fff"></div>
<div class="a" style="left:604px;top:251px;width:7px;height:1px;background:#5a5a5a"></div>
<div class="a" style="left:604px;top:252px;width:7px;height:1px;background:#f4f4f4"></div>
<div class="a" style="left:604px;top:253px;width:7px;height:1px;background:#5a5a5a"></div>
<div class="a" style="left:604px;top:254px;width:7px;height:1px;background:#f4f4f4"></div>
<div class="a" style="left:604px;top:255px;width:7px;height:1px;background:#5a5a5a"></div>
<div class="a" style="left:604px;top:256px;width:7px;height:1px;background:#f4f4f4"></div>
<div class="a" style="left:604px;top:257px;width:7px;height:1px;background:#5a5a5a"></div>
<div class="a" style="left:604px;top:258px;width:7px;height:1px;background:#f4f4f4"></div>
</body></html>
